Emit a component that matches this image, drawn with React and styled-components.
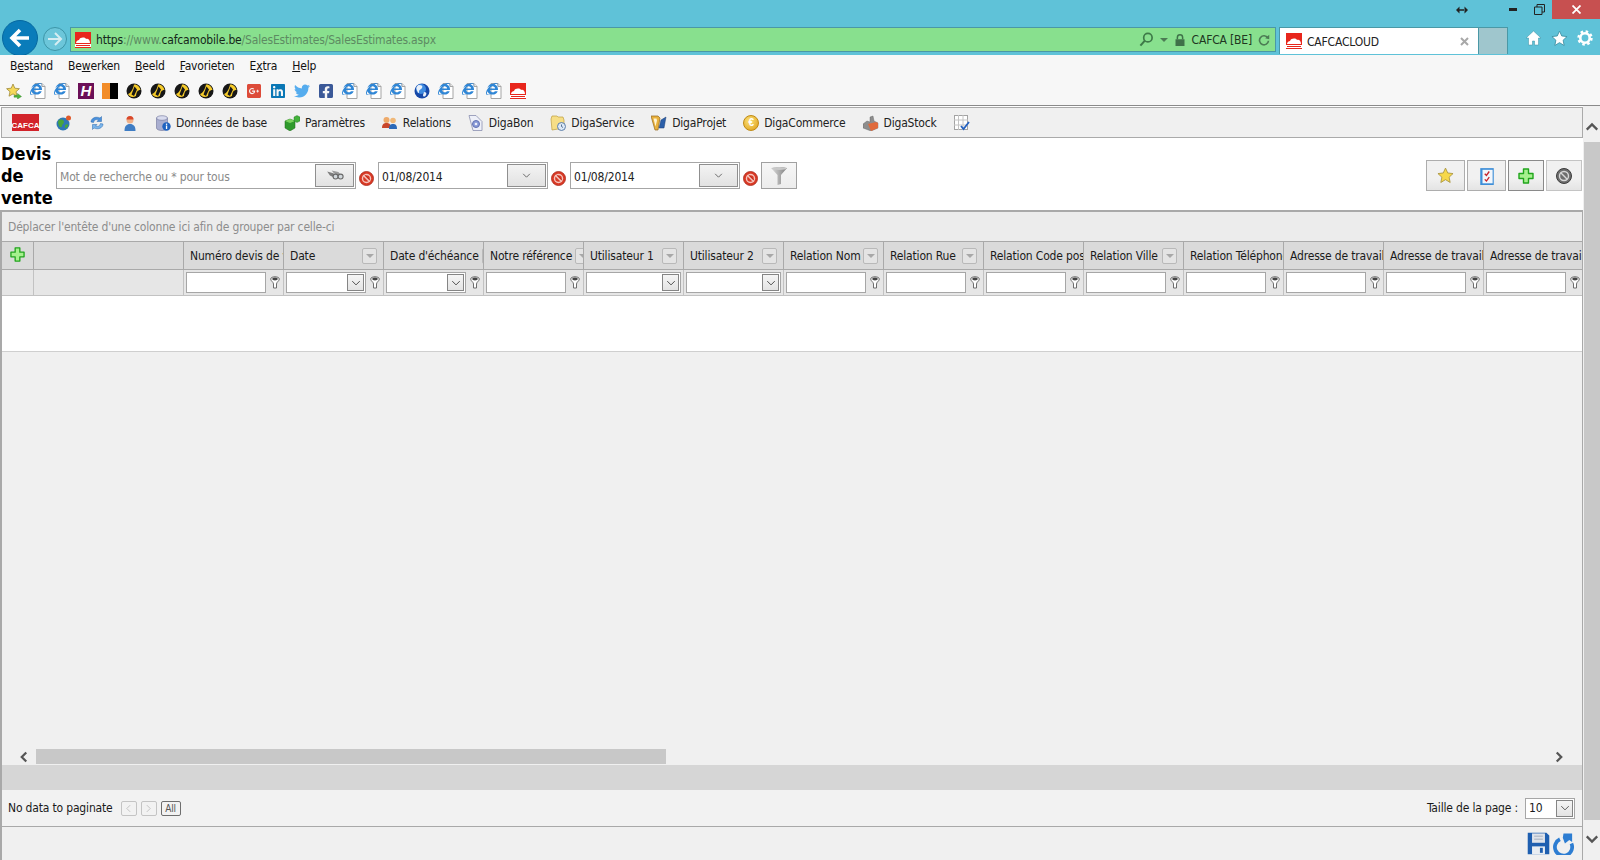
import React from "react";
import styled, { createGlobalStyle } from "styled-components";
import {
  FaInternetExplorer,
  FaGooglePlusSquare,
  FaLinkedin,
  FaTwitter,
  FaFacebookSquare,
} from "react-icons/fa";

const UI_FONT = `"DejaVu Sans Condensed", "DejaVu Sans", "Liberation Sans", sans-serif`;

const GlobalStyle = createGlobalStyle`
  html, body {
    margin: 0;
    padding: 0;
    background: #fff;
    overflow: hidden;
  }
  body {
    font-family: ${UI_FONT};
    font-stretch: condensed;
    font-size: 12px;
    letter-spacing: -0.17px;
    color: #1c1c1c;
  }
  * { box-sizing: border-box; }
`;

const Page = styled.div`
  width: 1600px;
  height: 860px;
  display: flex;
  flex-direction: column;
  overflow: hidden;
`;

/* browser chrome */
const Chrome = styled.header`
  position: relative;
  height: 55px;
  flex: none;
  background: #5fc2d8;
  padding-top: 27px;
  display: flex;
  align-items: flex-start;
  overflow: hidden;
`;

const WindowControls = styled.div`
  position: absolute;
  top: 0;
  right: 0;
  display: flex;
  align-items: flex-start;
`;

const WinButton = styled.div`
  width: ${(p) => p.$w || 25}px;
  height: 19px;
  display: flex;
  align-items: center;
  justify-content: center;
  background: ${(p) => (p.$close ? "#c75050" : "transparent")};
`;

const BackCircle = styled.div`
  position: absolute;
  left: 2px;
  top: 20px;
  width: 36px;
  height: 36px;
  border-radius: 50%;
  background: #0a7cba;
  border: 1px solid #0668a0;
  display: flex;
  align-items: center;
  justify-content: center;
`;

const ForwardCircle = styled.div`
  width: 24px;
  height: 24px;
  margin: 0 3px 0 43px;
  border-radius: 50%;
  border: 1px solid #3d95a8;
  background: #6cc6da;
  display: flex;
  align-items: center;
  justify-content: center;
`;

const AddressBar = styled.div`
  width: 1206px;
  height: 25px;
  background: #88e08e;
  border: 1px solid #4a98a6;
  display: flex;
  align-items: center;
  padding: 0 5px 0 4px;
  font-size: 12px;
`;

const Url = styled.span`
  margin-left: 5px;
  color: #5d8b62;
  b {
    font-weight: 400;
    color: #16281a;
  }
`;

const AddressRight = styled.div`
  margin-left: auto;
  display: flex;
  align-items: center;
  gap: 6px;
  color: #20361f;
`;

const Tab = styled.div`
  width: 200px;
  height: 27px;
  margin-left: 3px;
  background: #fff;
  border: 1px solid #4a98a6;
  border-bottom: 0;
  display: flex;
  align-items: center;
  gap: 5px;
  padding: 0 6px;
  font-size: 12px;
  color: #222;
`;

const TabTitle = styled.span`
  margin-top: 2px;
`;

const TabClose = styled.span`
  margin-left: auto;
  margin-right: 3px;
  display: flex;
`;

const NewTab = styled.div`
  width: 29px;
  height: 27px;
  background: #9fc6cd;
  border: 1px solid #4a98a6;
  border-width: 1px 1px 0 0;
`;

const ChromeIcons = styled.div`
  display: flex;
  gap: 9px;
  margin-left: 17px;
  margin-top: 3px;
`;

const MenuBar = styled.nav`
  height: 22px;
  flex: none;
  background: #f7f7f7;
  display: flex;
  align-items: center;
  padding-left: 10px;
  gap: 15px;
  font-size: 12px;
  color: #111;
  u { text-underline-offset: 1px; }
`;

const FavBar = styled.div`
  height: 29px;
  flex: none;
  background: #f7f7f7;
  border-bottom: 1px solid #8a8a8a;
  display: flex;
  align-items: flex-start;
  padding: 6px 0 0 6px;
  gap: 8px;
`;

const Content = styled.div`
  flex: 1;
  min-height: 0;
  display: flex;
  background: #fff;
`;

const Main = styled.main`
  width: 1583px;
  display: flex;
  flex-direction: column;
  padding-top: 1px;
`;

const PageScroll = styled.aside`
  width: 17px;
  background: #f0f0f0;
  display: flex;
  flex-direction: column;
  align-items: center;
  padding-top: 14px;
`;

const PageThumb = styled.div`
  width: 16px;
  margin-left: 1px;
  height: 678px;
  margin-top: 8px;
  background: #c8c8c8;
`;

const PageArrow = styled.div`
  display: flex;
  margin-top: ${(p) => p.$top || 0}px;
`;

/* app toolbar */
const Toolbar = styled.div`
  height: 31px;
  flex: none;
  margin-left: 1px;
  background: #f0f0f0;
  border: 1px solid #aaa;
  display: flex;
  align-items: center;
  padding-left: 10px;
  gap: 17px;
  font-size: 12px;
  color: #222;
`;

const ToolItem = styled.div`
  display: flex;
  align-items: center;
  gap: 5px;
`;

const LogoBox = styled.div`
  width: 27px;
  height: 17px;
  background: #d2232a;
  color: #fff;
  font: 700 8px/1 "Liberation Sans", sans-serif;
  letter-spacing: 0;
  display: flex;
  align-items: flex-end;
  justify-content: center;
  padding-bottom: 1px;
`;

const PageHeader = styled.div`
  height: 72px;
  flex: none;
  display: flex;
  align-items: center;
  padding: 3px 1px 0 1px;
`;

const Title = styled.h1`
  width: 55px;
  margin: 0;
  font-size: 18px;
  line-height: 22px;
  font-weight: 700;
  letter-spacing: 0;
  color: #000;
`;

const Field = styled.div`
  width: ${(p) => p.$w}px;
  height: 27px;
  background: #fff;
  border: 1px solid #a6a6a6;
  display: flex;
  align-items: center;
  padding: 0 1px 0 3px;
  font-size: 12px;
  color: ${(p) => (p.$placeholder ? "#8a8a8a" : "#222")};
`;

const FieldText = styled.span`
  margin-top: 2px;
`;

const FieldButton = styled.div`
  width: 39px;
  height: 23px;
  margin-left: auto;
  border: 1px solid #8f8f8f;
  background: linear-gradient(#f3f3f3, #e2e2e2);
  display: flex;
  align-items: center;
  justify-content: center;
`;

const ClearWrap = styled.div`
  display: flex;
  margin: 5px 4px 0 3px;
`;

const FilterButton = styled.div`
  width: 36px;
  height: 27px;
  margin-left: -1px;
  border: 1px solid #a0a0a0;
  background: linear-gradient(#f6f6f6, #ececec);
  display: flex;
  align-items: center;
  justify-content: center;
`;

const Actions = styled.div`
  margin-left: auto;
  display: flex;
  gap: 2px;
`;

const ActionButton = styled.div`
  width: ${(p) => p.$w}px;
  height: 31px;
  border: 1px solid ${(p) => p.$border || "#adadad"};
  background: linear-gradient(#f1f1f1 60%, #e4e4e4);
  display: flex;
  align-items: center;
  justify-content: center;
`;

/* grid */
const Grid = styled.section`
  flex: 1;
  min-height: 0;
  display: flex;
  flex-direction: column;
  background: #f0f0f0;
  border-top: 2px solid #a9a9a9;
  border-left: 2px solid #a9a9a9;
  border-right: 1px solid #a9a9a9;
`;

const GroupPanel = styled.div`
  height: 30px;
  flex: none;
  background: #ececec;
  border-bottom: 1px solid #a9a9a9;
  display: flex;
  align-items: center;
  padding-left: 6px;
  color: #8d8d8d;
  font-size: 12px;
`;

const GridRow = styled.div`
  display: grid;
  grid-template-columns: 32px 150px repeat(14, 100px);
  height: ${(p) => p.$h}px;
  flex: none;
  overflow: hidden;
  background: ${(p) => p.$bg};
  border-bottom: 1px solid ${(p) => p.$line};
`;

const HeadCell = styled.div`
  display: flex;
  align-items: center;
  overflow: hidden;
  padding: 0 6px 0 6px;
  border-right: 1px solid #a9a9a9;
  color: #1a1a1a;
  white-space: nowrap;
  &:first-child { justify-content: center; padding: 0 0 3px; }
`;

const HeadText = styled.span`
  flex: none;
  margin-right: 3px;
`;

const SortButton = styled.span`
  flex: none;
  width: 15px;
  height: 16px;
  margin-left: auto;
  border: 1px solid #b9b9b9;
  border-radius: 2px;
  background: #e4e4e4;
  display: flex;
  align-items: center;
  justify-content: center;
  &::after {
    content: "";
    border: 4px solid transparent;
    border-top: 4px solid #a8a8a8;
    border-bottom: 0;
  }
`;

const FilterCell = styled.div`
  display: flex;
  align-items: center;
  gap: 4px;
  padding-left: 2px;
  border-right: 1px solid #c2c2c2;
`;

const FilterInput = styled.div`
  width: ${(p) => (p.$wide ? 95 : 80)}px;
  height: 21px;
  flex: none;
  background: #fff;
  border: 1px solid #a6a6a6;
  display: flex;
  align-items: center;
  justify-content: flex-end;
  padding-right: 1px;
`;

const SelectButton = styled.span`
  width: 17px;
  height: 17px;
  border: 1px solid #858585;
  background: linear-gradient(#f5f5f5, #e3e3e3);
  display: flex;
  align-items: center;
  justify-content: center;
`;

const EmptyRow = styled.div`
  height: 56px;
  flex: none;
  background: #fff;
  border-bottom: 1px solid #cfcfcf;
`;

const GridBody = styled.div`
  flex: 1;
  min-height: 0;
`;

const HScroll = styled.div`
  height: 16px;
  flex: none;
  display: flex;
  align-items: center;
  padding: 0 17px 1px 16px;
`;

const HThumb = styled.div`
  width: 630px;
  height: 15px;
  margin-left: 6px;
  background: #c8c8c8;
`;

const HRightArrow = styled.div`
  margin-left: auto;
  display: flex;
`;

const FooterBand = styled.div`
  height: 25px;
  flex: none;
  background: #d6d6d6;
`;

const Pager = styled.div`
  height: 37px;
  flex: none;
  background: #f2f2f2;
  border-bottom: 1px solid #a9a9a9;
  display: flex;
  align-items: center;
  padding: 0 7px 0 6px;
  font-size: 12px;
  color: #1a1a1a;
`;

const PagerButton = styled.span`
  width: ${(p) => p.$w || 16}px;
  height: 15px;
  margin-left: ${(p) => p.$ml || 4}px;
  border: 1px solid ${(p) => (p.$active ? "#6e6e6e" : "#c4c4c4")};
  border-radius: 2px;
  display: flex;
  align-items: center;
  justify-content: center;
  font-size: 10px;
  color: #555;
`;

const PageSize = styled.div`
  margin-left: auto;
  display: flex;
  align-items: center;
  gap: 7px;
`;

const SizeSelect = styled.div`
  width: 50px;
  height: 21px;
  background: #fff;
  border: 1px solid #a6a6a6;
  display: flex;
  align-items: center;
  justify-content: space-between;
  padding: 0 1px 0 3px;
`;

const BottomBar = styled.div`
  height: 33px;
  flex: none;
  display: flex;
  justify-content: flex-end;
  align-items: center;
  padding: 0 7px 0 0;
  gap: 2px;
`;

/* drawings */
const IconSvg = styled.svg`
  flex: none;
  display: block;
`;

const Ico = ({ s = 16, children }) => (
  <IconSvg width={s} height={s} viewBox="0 0 16 16">
    {children}
  </IconSvg>
);

const Cafca = () => (
  <Ico>
    <rect width="16" height="16" fill="#e8261c" />
    <path d="M1 11c0-2 2-3 3-3 1-3 6-3 7-1 2-1 4 1 4 4z" fill="#fff" />
    <rect y="12" width="16" height="3" fill="#fff" />
    <rect x="1" y="13" width="14" height="1" fill="#e8261c" />
  </Ico>
);

const IeWrap = styled.span`
  position: relative;
  width: 16px;
  height: 16px;
  flex: none;
  display: block;
  svg { position: absolute; }
`;

const IeDoc = () => (
  <IeWrap>
    <Ico>
      <path d="M5 .5h7l3 3v12H5z" fill="#fff" stroke="#a5a5a5" />
      <path d="M12 .5v3h3" fill="#e8e8e8" stroke="#a5a5a5" />
    </Ico>
    <FaInternetExplorer size={12} color="#2f86d6" />
  </IeWrap>
);

const BlackDot = () => (
  <Ico>
    <circle cx="8" cy="8" r="7.500" fill="#171717" />
    <path d="M2 11c3-1 5-5 6-9.500C11 1 14 4 14.500 7c-3 0-4 2-4.500 6-3 2-6.500 1-8-2z" fill="#f6cb2a" />
    <path d="M8.500 3.500L11 6.500 8 13l-2.500-1.500z" fill="#171717" />
  </Ico>
);

const HLogoBox = styled.span`
  width: 16px;
  height: 16px;
  flex: none;
  background: #6b0f57;
  color: #fff;
  font: italic 700 15px/16px "Liberation Sans", sans-serif;
  font-stretch: normal;
  letter-spacing: 0;
  text-align: center;
`;

const Flag = () => (
  <Ico>
    <rect width="8" height="16" fill="#f28c28" />
    <rect x="8" width="8" height="16" fill="#000" />
  </Ico>
);

const Star = ({ s = 16, fill = "#f6d84a", stroke = "#a89340" }) => (
  <Ico s={s}>
    <path d="M8 1l2.100 4.600 5 .6-3.700 3.400 1 5L8 11.900 3.600 14.600l1-5L.9 6.200l5-.6z" fill={fill} stroke={stroke} strokeWidth="0.800" />
  </Ico>
);

const FavStar = () => (
  <Ico>
    <path d="M7 1l1.800 4.200 4.600.5-3.400 3 1 4.500L7 10.900 3 13.200l1-4.500-3.400-3 4.600-.5z" fill="#f5d95a" stroke="#a08a3a" strokeWidth="0.800" />
    <path d="M8 12.500h3.500V10.500l4 3-4 2.500v-1.800H8z" fill="#4cb53a" stroke="#2f7f25" strokeWidth="0.400" />
  </Ico>
);

const WorldGlobe = () => (
  <Ico>
    <circle cx="8" cy="8" r="7.500" fill="#1648a8" />
    <circle cx="7" cy="6" r="5" fill="#3f8be0" />
    <path d="M5 2c3 0 4 1 3 3S5 6 5 9 3 8 2.500 6 4 2 5 2zM10 9c2 0 3 1 2 3s-3 2-3 0z" fill="#e8f0fa" />
  </Ico>
);

const GlobeDot = () => (
  <Ico>
    <circle cx="7" cy="9" r="6.500" fill="#2f78b5" />
    <path d="M3 5c3-1 5 0 5 2s-2 2-2 4-3 1-3 0-2-4 0-6zM9 10c2-1 4-1 3 1s-3 3-3 1z" fill="#48a53c" />
    <circle cx="12.500" cy="3" r="2.500" fill="#e0592a" />
  </Ico>
);

const Sync = () => (
  <Ico>
    <path d="M2 7c0-4 5-6 9-4l1.500-1.500V6.500H8L9.500 5C7 4 5 5 4.500 7.500z" fill="#4a90dc" stroke="#2467ad" strokeWidth="0.500" />
    <path d="M14 9c0 4-5 6-9 4l-1.500 1.500V9.500H8L6.500 11c2.500 1 4.500 0 5-2.500z" fill="#7ab5ec" stroke="#2467ad" strokeWidth="0.500" />
  </Ico>
);

const UserIcon = () => (
  <Ico>
    <path d="M2.500 16c0-5 2-7 5.500-7s5.500 2 5.500 7z" fill="#3f7dc4" />
    <circle cx="8" cy="5" r="3.500" fill="#f0b088" />
    <path d="M4.500 4.500a3.500 3.500 0 0 1 7 0z" fill="#d9482b" />
  </Ico>
);

const DbIcon = () => (
  <Ico>
    <path d="M1.500 3v10c0 1.500 2.500 2.500 5.500 2.500s5.500-1 5.500-2.500V3z" fill="#a9aed0" stroke="#6d7299" strokeWidth="0.600" />
    <ellipse cx="7" cy="3" rx="5.500" ry="2.300" fill="#d8dbee" stroke="#6d7299" strokeWidth="0.600" />
    <circle cx="11.500" cy="11.500" r="4.200" fill="#1f62c0" />
    <rect x="10.900" y="10.500" width="1.300" height="3.500" fill="#fff" />
    <rect x="10.900" y="8.600" width="1.300" height="1.300" fill="#fff" />
  </Ico>
);

const CubesIcon = () => (
  <Ico>
    <path d="M1 6l5-2 5 2v7l-5 3-5-3z" fill="#2f9a2c" stroke="#1c6a1b" strokeWidth="0.500" />
    <path d="M1 6l5 2 5-2-5-2z" fill="#7ad35e" />
    <path d="M10 2l3-1.500L16 2v4l-3 1.500L10 6z" fill="#43b23b" stroke="#1c6a1b" strokeWidth="0.400" />
  </Ico>
);

const PeopleIcon = () => (
  <Ico>
    <path d="M0 13c0-4 2-5 4.500-5S9 9 9 13z" fill="#c9472b" />
    <circle cx="4.500" cy="5" r="3" fill="#eeaa6a" />
    <path d="M7 14c0-4 1.500-5 4-5s4 1 4 5z" fill="#2c69b8" />
    <circle cx="11" cy="5.500" r="2.800" fill="#f0b878" />
  </Ico>
);

const BonIcon = () => (
  <Ico>
    <path d="M1 .5h7l6 6v9H5z" fill="#eef0f8" stroke="#8a8fb0" strokeWidth="0.800" />
    <circle cx="8" cy="9" r="3.500" fill="#8a9bd8" stroke="#6272b4" />
    <circle cx="8" cy="9" r="1.300" fill="#eef0f8" />
  </Ico>
);

const ServiceIcon = () => (
  <Ico>
    <path d="M1 4l1-3h5l1 1h5l1 3v8l-12 2z" fill="#f6de86" stroke="#bd9d3e" strokeWidth="0.700" />
    <circle cx="11.500" cy="11.500" r="4" fill="#dce8f6" stroke="#5c7ea8" />
    <path d="M11.500 9.500v2l1.500 1" fill="none" stroke="#33547c" strokeWidth="0.800" />
  </Ico>
);

const ProjetIcon = () => (
  <Ico>
    <path d="M0 1h7l2 2-2 12H4z" fill="#e8b13c" stroke="#93651a" strokeWidth="0.700" />
    <path d="M2.500 3.500h3l.5 2-1.500 6z" fill="#fff3d0" />
    <path d="M8 13l2-8 5-3-2 11z" fill="#2b5fa8" stroke="#1d3f74" strokeWidth="0.500" />
  </Ico>
);

const CoinCircle = styled.span`
  width: 16px;
  height: 16px;
  flex: none;
  border-radius: 50%;
  background: radial-gradient(circle at 40% 35%, #fbe27a, #dd9b13);
  border: 1px solid #c08a12;
  color: #fff;
  font: 700 10px/14px "Liberation Sans", sans-serif;
  font-stretch: normal;
  text-align: center;
`;

const StockIcon = () => (
  <Ico>
    <path d="M0 9l4-3 3 1V2l3-1 1 5 4 2v5l-7 3-8-3z" fill="#8d8d8d" stroke="#5e5e5e" strokeWidth="0.400" />
    <path d="M5 9l8-2 2 1v5l-7 3z" fill="#e06a3c" />
  </Ico>
);

const GridCheck = () => (
  <Ico>
    <rect x="0.500" y="0.500" width="13" height="14" fill="#fff" stroke="#a3a3a3" />
    <path d="M0 5h14M0 10h14M4.500 0v15M9 0v15" stroke="#c4c4c4" />
    <path d="M7 11l2.500 3L15 7" fill="none" stroke="#2461c0" strokeWidth="1.800" />
  </Ico>
);

const Ban = ({ s = 15 }) => (
  <Ico s={s}>
    <circle cx="8" cy="8" r="7.500" fill="#d93a26" stroke="#a82415" strokeWidth="0.800" />
    <circle cx="8" cy="8" r="4.300" fill="none" stroke="#f6c5bd" strokeWidth="1.500" />
    <path d="M4.500 4.500l7 7" stroke="#f6c5bd" strokeWidth="1.500" />
    <path d="M6 3.800l6 6" stroke="#a82415" strokeWidth="0.600" />
  </Ico>
);

const Binoculars = () => (
  <Ico s={18}>
    <path d="M1 4l5.500 1.500L9 8l-1.500 1.500-4-2z" fill="#7d7d7d" />
    <path d="M5 3l6 1.500 3 3.500-3-.5-4-2z" fill="#9a9a9a" />
    <circle cx="8.500" cy="8.500" r="2.200" fill="#d2d8dc" stroke="#6a6a6a" />
    <circle cx="13" cy="8.500" r="2.200" fill="#d2d8dc" stroke="#6a6a6a" />
  </Ico>
);

const BigFunnel = () => (
  <svg width="18" height="20" viewBox="0 0 18 20">
    <defs>
      <linearGradient id="fn" x1="0" x2="1" y1="0" y2="0">
        <stop offset="0" stopColor="#dedede" />
        <stop offset="1" stopColor="#7e7e7e" />
      </linearGradient>
    </defs>
    <path d="M1 2c4-1.500 12-1.500 16 0l-6 7v9l-3.500 1V9z" fill="url(#fn)" />
    <ellipse cx="9" cy="2.500" rx="7.500" ry="1.500" fill="#c8c8c8" />
  </svg>
);

const TinyFunnel = () => (
  <svg width="10" height="13" viewBox="0 0 10 13">
    <path d="M.7 3c0-3 8.600-3 8.600 0 0 2-2.800 3-2.800 5v4h-3V8C3.500 6 .7 5 .7 3z" fill="#fff" stroke="#6d6d6d" />
    <ellipse cx="5" cy="3" rx="2.800" ry="1.400" fill="#444" />
  </svg>
);

const Chevron = ({ dir = "down", s = 9, color = "#555", w = 1.500 }) => {
  const d = {
    down: "M2 5l6 6 6-6",
    up: "M2 11l6-6 6 6",
    left: "M11 2L5 8l6 6",
    right: "M5 2l6 6-6 6",
  }[dir];
  return (
    <Ico s={s}>
      <path d={d} fill="none" stroke={color} strokeWidth={w} />
    </Ico>
  );
};

const Plus = ({ s = 16 }) => (
  <Ico s={s}>
    <path d="M5.500 1h5v4.500H15v5h-4.500V15h-5v-4.500H1v-5h4.500z" fill="#a6f08e" stroke="#20a51c" strokeWidth="1.400" strokeLinejoin="round" />
  </Ico>
);

const Checklist = () => (
  <Ico s={18}>
    <rect x="2" y="1" width="12" height="15" fill="#3d8ed8" />
    <rect x="4" y="2.500" width="9" height="12" fill="#f2f6fb" />
    <path d="M6 6l1.500 1.500L10 4M6 11l1.500 1.500L10 9" fill="none" stroke="#c8242a" strokeWidth="1.200" />
  </Ico>
);

const GreyBan = () => (
  <Ico>
    <circle cx="8" cy="8" r="7.500" fill="#6e6e6e" stroke="#3c3c3c" />
    <circle cx="8" cy="8" r="4.500" fill="none" stroke="#d8d8d8" strokeWidth="1.400" />
    <path d="M4.800 4.800l6.400 6.400" stroke="#d8d8d8" strokeWidth="1.400" />
  </Ico>
);

const Save = () => (
  <Ico s={23}>
    <path d="M.5 .5h13l2 2v13H.5z" fill="#1f5fb0" />
    <rect x="3.500" y="1" width="9" height="6.500" fill="#dfe3ea" />
    <path d="M5 3h6M5 5h6" stroke="#b8c0cc" />
    <rect x="3.500" y="10" width="9" height="5.500" fill="#e9edf2" />
    <rect x="9" y="11" width="2" height="3.500" fill="#1f5fb0" />
  </Ico>
);

const Undo = () => (
  <Ico s={23}>
    <path d="M5.500 5A6 6 0 1 0 13.500 8" fill="none" stroke="#2d7dd2" strokeWidth="2.600" />
    <path d="M8 1h6v6L12 5.500 9 8 7.500 4z" fill="#2d7dd2" />
  </Ico>
);

const MENU = [
  ["B", "e", "stand"],
  ["Be", "w", "erken"],
  ["", "B", "eeld"],
  ["", "F", "avorieten"],
  ["E", "x", "tra"],
  ["", "H", "elp"],
];

const FAVORITES = [
  <FavStar key="star" />,
  <IeDoc key="e1" />,
  <IeDoc key="e2" />,
  <HLogoBox key="h">H</HLogoBox>,
  <Flag key="flag" />,
  <BlackDot key="d1" />,
  <BlackDot key="d2" />,
  <BlackDot key="d3" />,
  <BlackDot key="d4" />,
  <BlackDot key="d5" />,
  <FaGooglePlusSquare key="g" size={16} color="#dd4b39" />,
  <FaLinkedin key="in" size={16} color="#0a77b5" />,
  <FaTwitter key="tw" size={16} color="#55acee" />,
  <FaFacebookSquare key="fb" size={16} color="#3b5998" />,
  <IeDoc key="e3" />,
  <IeDoc key="e4" />,
  <IeDoc key="e5" />,
  <WorldGlobe key="world" />,
  <IeDoc key="e6" />,
  <IeDoc key="e7" />,
  <IeDoc key="e8" />,
  <Cafca key="c" />,
];

const COLUMNS = [
  { title: "Numéro devis de vente" },
  { title: "Date", sort: true, select: true },
  { title: "Date d'échéance", sort: true, select: true },
  { title: "Notre référence", sort: true },
  { title: "Utilisateur 1", sort: true, select: true, wide: true },
  { title: "Utilisateur 2", sort: true, select: true, wide: true },
  { title: "Relation Nom", sort: true },
  { title: "Relation Rue", sort: true },
  { title: "Relation Code postal" },
  { title: "Relation Ville", sort: true },
  { title: "Relation Téléphone" },
  { title: "Adresse de travail 1" },
  { title: "Adresse de travail 2" },
  { title: "Adresse de travail 3" },
];

export default function App() {
  return (
    <Page>
      <GlobalStyle />
      <Chrome>
        <BackCircle>
          <svg width="24" height="24" viewBox="0 0 24 24">
            <path d="M12 4l-8 8 8 8M4 12h17" fill="none" stroke="#fff" strokeWidth="3.600" />
          </svg>
        </BackCircle>
        <ForwardCircle>
          <svg width="16" height="16" viewBox="0 0 16 16">
            <path d="M8 2l6 6-6 6M14 8H1" fill="none" stroke="#d6edf2" strokeWidth="2" />
          </svg>
        </ForwardCircle>
        <AddressBar>
          <Cafca />
          <Url>
            <b>https</b>://www.<b>cafcamobile.be</b>/SalesEstimates/SalesEstimates.aspx
          </Url>
          <AddressRight>
            <Ico s={15}>
              <circle cx="9.500" cy="6" r="4.500" fill="none" stroke="#3e7a48" strokeWidth="1.800" />
              <path d="M6 9.500L1.500 14.500" stroke="#3e7a48" strokeWidth="2.200" />
            </Ico>
            <svg width="8" height="4" viewBox="0 0 8 4">
              <path d="M0 0h8L4 4z" fill="#4c7c54" />
            </svg>
            <Ico s={12}>
              <rect x="2" y="7" width="12" height="9" fill="#3f7249" />
              <path d="M4.500 7V4.500a3.500 3.500 0 0 1 7 0V7" fill="none" stroke="#3f7249" strokeWidth="2" />
            </Ico>
            <span>CAFCA [BE]</span>
            <Ico s={12}>
              <path d="M13 5a6 6 0 1 0 1 4" fill="none" stroke="#4c7c54" strokeWidth="2.200" />
              <path d="M9.500 5.500L15 7V1z" fill="#4c7c54" />
            </Ico>
          </AddressRight>
        </AddressBar>
        <Tab>
          <Cafca />
          <TabTitle>CAFCACLOUD</TabTitle>
          <TabClose>
            <svg width="9" height="9" viewBox="0 0 9 9">
              <path d="M1 1l7 7M8 1L1 8" stroke="#a8a8a8" strokeWidth="2" />
            </svg>
          </TabClose>
        </Tab>
        <NewTab />
        <ChromeIcons>
          <svg width="17" height="16" viewBox="0 0 16 16">
            <path d="M8 1L.5 8H3v7h4v-4h2v4h4V8h2.500z" fill="#fff" stroke="#3b8ea0" strokeWidth="0.500" />
          </svg>
          <Star s={17} fill="#fff" stroke="#3b8ea0" />
          <svg width="16" height="16" viewBox="0 0 16 16">
            <circle cx="8" cy="8" r="4.700" fill="none" stroke="#fff" strokeWidth="2.600" />
            <circle cx="8" cy="8" r="6.400" fill="none" stroke="#fff" strokeWidth="2.600" strokeDasharray="2.500 2.500" />
          </svg>
        </ChromeIcons>
        <WindowControls>
          <WinButton $w={30}>
            <svg width="12" height="8" viewBox="0 0 12 8">
              <path d="M0 4l3.500-3.500v7zM12 4L8.500.5v7zM3 3.200h6v1.600H3z" fill="#222" />
            </svg>
          </WinButton>
          <WinButton $w={25} />
          <WinButton $w={25}>
            <svg width="11" height="3" viewBox="0 0 11 3">
              <rect width="8" height="3" fill="#222" />
            </svg>
          </WinButton>
          <WinButton $w={25}>
            <svg width="11" height="11" viewBox="0 0 11 11">
              <path d="M.5 3h7.500v7.500H.5zM3 3V.5h7.500V8H8" fill="none" stroke="#222" />
            </svg>
          </WinButton>
          <WinButton $w={48} $close>
            <svg width="9" height="9" viewBox="0 0 9 9">
              <path d="M.5.5l8 8M8.500.5l-8 8" stroke="#fff" strokeWidth="1.800" />
            </svg>
          </WinButton>
        </WindowControls>
      </Chrome>

      <MenuBar>
        {MENU.map(([a, u, b]) => (
          <span key={a + u + b}>
            {a}
            <u>{u}</u>
            {b}
          </span>
        ))}
      </MenuBar>

      <FavBar>{FAVORITES}</FavBar>

      <Content>
        <Main>
          <Toolbar>
            <LogoBox>CAFCA</LogoBox>
            <GlobeDot />
            <Sync />
            <UserIcon />
            <ToolItem>
              <DbIcon />
              Données de base
            </ToolItem>
            <ToolItem>
              <CubesIcon />
              Paramètres
            </ToolItem>
            <ToolItem>
              <PeopleIcon />
              Relations
            </ToolItem>
            <ToolItem>
              <BonIcon />
              DigaBon
            </ToolItem>
            <ToolItem>
              <ServiceIcon />
              DigaService
            </ToolItem>
            <ToolItem>
              <ProjetIcon />
              DigaProjet
            </ToolItem>
            <ToolItem>
              <CoinCircle>€</CoinCircle>
              DigaCommerce
            </ToolItem>
            <ToolItem>
              <StockIcon />
              DigaStock
            </ToolItem>
            <GridCheck />
          </Toolbar>

          <PageHeader>
            <Title>Devis de vente</Title>
            <Field $w={300} $placeholder>
              <FieldText>Mot de recherche ou * pour tous</FieldText>
              <FieldButton>
                <Binoculars />
              </FieldButton>
            </Field>
            <ClearWrap>
              <Ban />
            </ClearWrap>
            <Field $w={170}>
              <FieldText>01/08/2014</FieldText>
              <FieldButton>
                <Chevron />
              </FieldButton>
            </Field>
            <ClearWrap>
              <Ban />
            </ClearWrap>
            <Field $w={170}>
              <FieldText>01/08/2014</FieldText>
              <FieldButton>
                <Chevron />
              </FieldButton>
            </Field>
            <ClearWrap>
              <Ban />
            </ClearWrap>
            <FilterButton>
              <BigFunnel />
            </FilterButton>
            <Actions>
              <ActionButton $w={39}>
                <Star s={17} />
              </ActionButton>
              <ActionButton $w={39}>
                <Checklist />
              </ActionButton>
              <ActionButton $w={36} $border="#8a8a8a">
                <Plus s={16} />
              </ActionButton>
              <ActionButton $w={36} $border="#c4c4c4">
                <GreyBan />
              </ActionButton>
            </Actions>
          </PageHeader>

          <Grid>
            <GroupPanel>Déplacer l'entête d'une colonne ici afin de grouper par celle-ci</GroupPanel>
            <GridRow $h={28} $bg="#dadada" $line="#a9a9a9">
              <HeadCell>
                <Plus s={15} />
              </HeadCell>
              <HeadCell />
              {COLUMNS.map((c, i) => (
                <HeadCell key={i}>
                  <HeadText>{c.title}</HeadText>
                  {c.sort && <SortButton />}
                </HeadCell>
              ))}
            </GridRow>
            <GridRow $h={26} $bg="#e6e6e6" $line="#c2c2c2">
              <FilterCell />
              <FilterCell />
              {COLUMNS.map((c, i) => (
                <FilterCell key={i}>
                  <FilterInput $wide={c.wide}>
                    {c.select && (
                      <SelectButton>
                        <Chevron s={10} color="#444" />
                      </SelectButton>
                    )}
                  </FilterInput>
                  {!c.wide && <TinyFunnel />}
                </FilterCell>
              ))}
            </GridRow>
            <EmptyRow />
            <GridBody />
            <HScroll>
              <Chevron dir="left" s={12} color="#555" w={3} />
              <HThumb />
              <HRightArrow>
                <Chevron dir="right" s={12} color="#555" w={3} />
              </HRightArrow>
            </HScroll>
            <FooterBand />
            <Pager>
              No data to paginate
              <PagerButton $ml={8}>
                <Chevron dir="left" s={9} color="#bbb" />
              </PagerButton>
              <PagerButton>
                <Chevron dir="right" s={9} color="#bbb" />
              </PagerButton>
              <PagerButton $w={20} $active>
                All
              </PagerButton>
              <PageSize>
                Taille de la page :
                <SizeSelect>
                  10
                  <SelectButton>
                    <Chevron s={10} color="#555" />
                  </SelectButton>
                </SizeSelect>
              </PageSize>
            </Pager>
            <BottomBar>
              <Save />
              <Undo />
            </BottomBar>
          </Grid>
        </Main>
        <PageScroll>
          <PageArrow>
            <Chevron dir="up" s={14} color="#555" w={2.600} />
          </PageArrow>
          <PageThumb />
          <PageArrow $top={12}>
            <Chevron s={14} color="#555" w={2.600} />
          </PageArrow>
        </PageScroll>
      </Content>
    </Page>
  );
}
